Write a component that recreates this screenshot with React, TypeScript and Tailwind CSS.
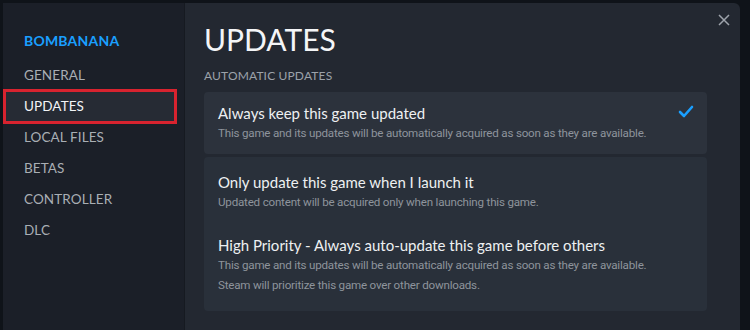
import React from "react";

const navItems = ["GENERAL", "UPDATES", "LOCAL FILES", "BETAS", "CONTROLLER", "DLC"];

const CheckIcon = () => (
  <svg width="16" height="13" viewBox="0 0 16 13" fill="none">
    <path d="M2 7 L6 11 L14 2" stroke="#1a9fff" strokeWidth="2.6" strokeLinecap="round" strokeLinejoin="round" />
  </svg>
);

const CloseIcon = () => (
  <svg width="12" height="12" viewBox="0 0 12 12" fill="none">
    <path d="M1 1 L11 11 M11 1 L1 11" stroke="#9ea3ab" strokeWidth="1.5" />
  </svg>
);

const Option = ({ title, lines }: { title: string; lines: string[] }) => (
  <div>
    <div className="text-[15px] leading-[20px] text-[#eef0f2]">{title}</div>
    {lines.map((l) => (
      <div
        key={l}
        className="mt-[1px] text-[11.6px] leading-[19px] tracking-[-0.2px] text-[#8e949c]"
        style={{ fontFamily: 'Roboto, "Noto Sans", sans-serif' }}
      >
        {l}
      </div>
    ))}
  </div>
);

const App = () => {
  return (
    <div
      className="h-[330px] w-[750px] overflow-hidden bg-[#0f1319] pl-[3px] pt-[3px]"
      style={{ fontFamily: 'Lato, "Noto Sans", sans-serif' }}
    >
      <div className="flex h-[340px] w-[737px] overflow-hidden rounded-tr-[6px]">
        {/* sidebar */}
        <div className="w-[182px] shrink-0 border-r border-[#161a21] bg-[#1b1f28] pt-[28px]">
          <div className="pl-[21px] text-[14px] font-bold leading-[20px] tracking-[0.2px] text-[#1a9fff]">
            BOMBANANA
          </div>
          <div className="mt-[9px] flex flex-col">
            {navItems.map((item) =>
              item === "UPDATES" ? (
                <div
                  key={item}
                  className="my-[-2px] flex h-[35px] w-[174px] items-center border-[3px] border-[#d8232f] bg-[#262b34] pl-[18px] text-[13.5px] tracking-[0.1px] text-[#f2f4f6]"
                >
                  {item}
                </div>
              ) : (
                <div
                  key={item}
                  className="flex h-[31px] items-center pl-[21px] text-[13.5px] tracking-[0.1px] text-[#a9aeb4]"
                >
                  {item}
                </div>
              )
            )}
          </div>
        </div>

        {/* content */}
        <div className="relative flex-1 bg-[#232831] pl-[19px] pr-[33px] pt-[18px]">
          <button className="absolute right-[10px] top-[11px]">
            <CloseIcon />
          </button>
          <h1 className="text-[30px] font-normal leading-[36px] text-[#f4f5f7]">UPDATES</h1>
          <div className="mt-[11px] text-[12px] leading-[16px] tracking-[0.15px] text-[#9ca2aa]">
            AUTOMATIC UPDATES
          </div>
          <div className="mt-[8px] flex h-[62px] items-start justify-between rounded-[4px] bg-[#2c323c] pl-[14px] pr-[13px] pt-[11px]">
            <Option
              title="Always keep this game updated"
              lines={["This game and its updates will be automatically acquired as soon as they are available."]}
            />
            <div className="pt-[2px]">
              <CheckIcon />
            </div>
          </div>
          <div className="mt-[3px] flex h-[154px] flex-col gap-[23px] rounded-[4px] bg-[#29303a] pl-[14px] pt-[15px]">
            <Option
              title="Only update this game when I launch it"
              lines={["Updated content will be acquired only when launching this game."]}
            />
            <Option
              title="High Priority - Always auto-update this game before others"
              lines={[
                "This game and its updates will be automatically acquired as soon as they are available.",
                "Steam will prioritize this game over other downloads.",
              ]}
            />
          </div>
        </div>
      </div>
    </div>
  );
};

export default App;
